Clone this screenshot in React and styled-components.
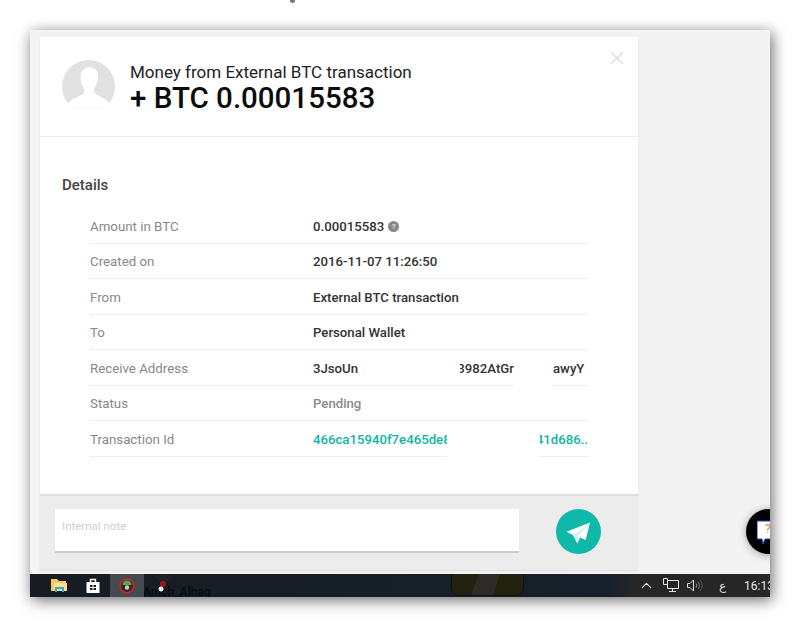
import styled, { createGlobalStyle } from 'styled-components';
import { ChevronUp } from 'lucide-react';

const GlobalStyle = createGlobalStyle`
  html, body {
    margin: 0;
    background: #fff;
    font-family: Roboto, "Liberation Sans", sans-serif;
  }
`;

const rows = [
  { label: 'Amount in BTC', value: '0.00015583', hint: true },
  { label: 'Created on', value: '2016-11-07 11:26:50' },
  { label: 'From', value: 'External BTC transaction' },
  { label: 'To', value: 'Personal Wallet' },
];

function App() {
  return (
    <Page>
      <GlobalStyle />
      <CursorMark />
      <Frame>
        <Main>
          <Panel>
            <Header>
              <Avatar viewBox="0 0 53 53">
                <circle cx="26.5" cy="26.5" r="26.5" fill="#e1e1e1" />
                <path
                  d="M5 45C8 38 18 37 22 33C23 31 22 29 21 27C19 24 18 18 19 14C20 9 24 7 27 7C31 7 35 9 36 14C37 18 35 24 33 27C32 29 31 31 33 33C37 37 45 38 48 45L48 53L5 53Z"
                  fill="#fff"
                />
              </Avatar>
              <Heading>
                <Title>Money from External BTC transaction</Title>
                <Amount>+ BTC 0.00015583</Amount>
              </Heading>
              <Close viewBox="0 0 14 14">
                <path d="M1 1L13 13M13 1L1 13" stroke="#dcdcdc" strokeWidth="1.3" fill="none" />
              </Close>
            </Header>
            <Body>
              <SectionTitle>Details</SectionTitle>
              <Table>
                {rows.map((row) => (
                  <Row key={row.label}>
                    <Label>{row.label}</Label>
                    <Value>
                      {row.value}
                      {row.hint && <Hint>?</Hint>}
                    </Value>
                  </Row>
                ))}
                <Row>
                  <Label>Receive Address</Label>
                  <Value>
                    <Piece $w={147}>3JsoUn</Piece>
                    <Piece $w={54} $end>3982AtGr</Piece>
                    <Gap $w={39} />
                    <Piece $w={35}>awyY</Piece>
                  </Value>
                </Row>
                <Row>
                  <Label>Status</Label>
                  <Value $muted>Pending</Value>
                </Row>
                <Row>
                  <Label>Transaction Id</Label>
                  <Value $link>
                    <Piece $w={134}>466ca15940f7e465de8</Piece>
                    <Gap $w={93} />
                    <Piece $w={48} $end>41d686..</Piece>
                  </Value>
                </Row>
              </Table>
            </Body>
            <Footer>
              <NoteBox>Internal note</NoteBox>
              <SendButton>
                <svg width="45" height="45" viewBox="0 0 45 45">
                  <path d="M34 13.500L10.500 22.700L17 26L21.300 34.500L24 28.500L29.700 31Z" fill="#fff" />
                  <path d="M34 13.500L17 26L21.300 34.500L22 27.500Z" fill="#d5f3ef" />
                </svg>
              </SendButton>
            </Footer>
          </Panel>
        </Main>
        <ChatBubble>
          <svg width="24" height="26" viewBox="0 0 24 26">
            <path d="M0 2H24V20H8L6 25L5 20H0Z" fill="#fff" stroke="#2a3fd0" strokeWidth="1" />
            <text x="8" y="14" fontSize="12" fill="#d9805a" fontFamily="Roboto">?</text>
          </svg>
        </ChatBubble>
        <Taskbar>
          <Wallpaper>
            <WallpaperName>Amch_Alhaq</WallpaperName>
            <WallpaperMark width="30" height="23" viewBox="0 0 30 23">
              <path d="M4 2L16 0L24 3L16 8L8 6Z" fill="#1f2226" />
              <circle cx="13" cy="10" r="3" fill="#a5121a" />
              <circle cx="11" cy="15" r="2.500" fill="#f2f2f2" />
            </WallpaperMark>
            <WallpaperBadge />
          </Wallpaper>
          <TaskIcons>
            <TaskIcon>
              <svg width="17" height="15" viewBox="0 0 17 15">
                <path d="M0 1H6L8 3H15V13H0Z" fill="#f4c95d" />
                <path d="M3 5H16V13H3Z" fill="#ffe08a" />
                <path d="M4 14V9H13V14H11V11H6V14Z" fill="#35a6e0" />
              </svg>
            </TaskIcon>
            <TaskIcon>
              <svg width="14" height="16" viewBox="0 0 14 16">
                <path d="M0.500 4H13.500V15H0.500Z" fill="#fff" />
                <path d="M4.500 4V1.500H9.500V4" stroke="#fff" strokeWidth="1.4" fill="none" />
                <path d="M4 7H6.500V9H4ZM7.500 7H10V9H7.500ZM4 10H6.500V12H4ZM7.500 10H10V12H7.500Z" fill="#1a1f24" />
              </svg>
            </TaskIcon>
            <TaskIcon $active>
              <svg width="16" height="16" viewBox="0 0 16 16">
                <circle cx="8" cy="8" r="6.800" fill="#2b2b2b" stroke="#d8242b" strokeWidth="1.600" />
                <path d="M3.500 7A4.500 4.500 0 0 1 12.500 7Z" fill="#57a64a" />
                <circle cx="8" cy="9.500" r="2.200" fill="#c9c9c9" />
              </svg>
            </TaskIcon>
          </TaskIcons>
          <Tray>
            <ChevronUp size={17} color="#e8e8e8" strokeWidth={1.6} />
            <svg width="16" height="15" viewBox="0 0 16 15" fill="none" stroke="#e4e4e4">
              <path d="M4.500 2.500H15.500V10.500H4.500Z" />
              <path d="M0.500 0.500H4.500V6.500H0.500Z" fill="#262626" />
              <path d="M9.500 10.500V13.500M6 13.500H13" />
            </svg>
            <svg width="16" height="13" viewBox="0 0 16 13" fill="none" stroke="#dcdcdc">
              <path d="M0.500 4.500H3L6.500 1V12L3 8.500H0.500Z" />
              <path d="M9 4.500A3 3 0 0 1 9 8.500" stroke="#999" />
              <path d="M11 3A5 5 0 0 1 11 10" stroke="#777" />
              <path d="M13 1A8 8 0 0 1 13 12" stroke="#555" />
            </svg>
            <Lang>ع</Lang>
            <Clock>16:13</Clock>
          </Tray>
        </Taskbar>
      </Frame>
    </Page>
  );
}

const Page = styled.div`
  position: relative;
  width: 800px;
  height: 627px;
  box-sizing: border-box;
  padding: 30px;
  overflow: hidden;
`;

const CursorMark = styled.div`
  position: absolute;
  left: 290px;
  top: 0;
  width: 5px;
  height: 3px;
  border-radius: 0 0 3px 3px;
  background: #777;
`;

const Frame = styled.div`
  position: relative;
  display: flex;
  flex-direction: column;
  width: 740px;
  height: 567px;
  overflow: hidden;
  background: #f3f3f3;
  box-shadow: 2px 3px 14px rgba(0, 0, 0, 0.6);
`;

const Main = styled.div`
  flex: 1;
  min-height: 0;
  padding: 7px 0 0 10px;
`;

const Panel = styled.div`
  display: flex;
  flex-direction: column;
  width: 598px;
  height: 533px;
  background: #fff;
  box-shadow: 0 1px 2px rgba(0, 0, 0, 0.08);
`;

const Header = styled.div`
  position: relative;
  display: flex;
  align-items: flex-start;
  gap: 15px;
  flex: none;
  box-sizing: border-box;
  height: 100px;
  padding: 23px 22px 0;
  border-bottom: 1px solid #ececec;
`;

const Avatar = styled.svg`
  flex: none;
  width: 53px;
  height: 53px;
  clip-path: inset(0 0 8% 0);
`;

const Heading = styled.div`
  display: flex;
  flex-direction: column;
  margin-top: 2px;
`;

const Title = styled.div`
  font-size: 17px;
  line-height: 20px;
  color: #222;
`;

const Amount = styled.div`
  font-size: 29.5px;
  line-height: 32px;
  font-weight: 500;
  color: #0c0c0c;
`;

const Close = styled.svg`
  position: absolute;
  top: 14px;
  right: 14px;
  width: 14px;
  height: 14px;
`;

const Body = styled.div`
  flex: 1;
  min-height: 0;
  padding: 39px 50px 0 22px;
`;

const SectionTitle = styled.div`
  font-size: 15px;
  line-height: 18px;
  font-weight: 500;
  color: #444;
  margin-bottom: 14px;
`;

const Table = styled.div`
  margin-left: 28px;
`;

const Row = styled.div`
  display: grid;
  grid-template-columns: 223px 1fr;
  align-items: center;
  box-sizing: border-box;
  height: 35.5px;
  padding-top: 2px;
  border-bottom: 1px solid #eee;
`;

const Label = styled.div`
  font-size: 13.3px;
  color: #888;
`;

const Value = styled.div`
  display: flex;
  align-items: center;
  align-self: stretch;
  white-space: nowrap;
  font-size: 13.2px;
  font-weight: 500;
  color: ${(p) => (p.$link ? '#10b5a3' : p.$muted ? '#8a8a8a' : '#333')};
`;

const Piece = styled.span`
  display: flex;
  justify-content: ${(p) => (p.$end ? 'flex-end' : 'flex-start')};
  flex: none;
  width: ${(p) => p.$w}px;
  overflow: hidden;
`;

const Gap = styled.span`
  flex: none;
  align-self: stretch;
  width: ${(p) => p.$w}px;
  margin-bottom: -1px;
  background: #fff;
`;

const Hint = styled.span`
  display: inline-flex;
  align-items: center;
  justify-content: center;
  width: 11px;
  height: 11px;
  margin-left: 4px;
  border-radius: 50%;
  background: #888;
  color: #ddd;
  font-size: 8px;
  font-weight: 700;
`;

const Footer = styled.div`
  display: flex;
  align-items: center;
  justify-content: space-between;
  flex: none;
  box-sizing: border-box;
  height: 76px;
  padding: 0 37px 4px 15px;
  background: #ececec;
  border-top: 2px solid #ddd;
`;

const NoteBox = styled.div`
  box-sizing: border-box;
  width: 464px;
  height: 44px;
  padding: 10px 7px;
  background: #fff;
  border-bottom: 2px solid #ccc;
  font-size: 11.5px;
  line-height: 14px;
  color: #d0d0d0;
`;

const SendButton = styled.div`
  display: flex;
  width: 45px;
  height: 45px;
  border-radius: 50%;
  background: #0fb8a8;
`;

const ChatBubble = styled.div`
  position: absolute;
  left: 716px;
  top: 479px;
  display: flex;
  align-items: center;
  box-sizing: border-box;
  width: 45px;
  height: 45px;
  padding-left: 11px;
  border-radius: 50%;
  background: #000;
  box-shadow: 0 1px 8px rgba(0, 0, 0, 0.35);
`;

const Taskbar = styled.div`
  position: relative;
  display: flex;
  align-items: center;
  justify-content: space-between;
  flex: none;
  height: 23px;
  background: linear-gradient(to right, #161c22 0, #17202a 78%, #262626 82%);
`;

const Wallpaper = styled.div`
  position: absolute;
  inset: 0;
  overflow: hidden;
`;

const WallpaperName = styled.span`
  position: absolute;
  left: 113px;
  top: 11px;
  font-size: 12px;
  font-weight: 700;
  color: #0a0c0e;
`;

const WallpaperMark = styled.svg`
  position: absolute;
  left: 120px;
  top: 0;
`;

const WallpaperBadge = styled.div`
  position: absolute;
  left: 421px;
  top: -4px;
  width: 73px;
  height: 26px;
  box-sizing: border-box;
  border: 1px solid #111;
  border-radius: 0 0 8px 8px;
  background: linear-gradient(110deg, #23220e 0 35%, #2c2b27 35% 62%, #23220e 62%);
`;

const TaskIcons = styled.div`
  position: relative;
  display: flex;
  height: 100%;
  padding-left: 12px;
`;

const TaskIcon = styled.div`
  display: flex;
  align-items: center;
  justify-content: center;
  width: 34px;
  height: 100%;
  background: ${(p) => (p.$active ? '#434b50' : 'transparent')};
`;

const Tray = styled.div`
  position: relative;
  display: flex;
  align-items: center;
  gap: 8px;
  height: 100%;
  margin-right: -4px;
`;

const Lang = styled.span`
  margin-left: 8px;
  font-size: 12px;
  color: #ddd;
`;

const Clock = styled.span`
  margin-left: 10px;
  font-size: 12px;
  color: #e6e6e6;
`;

export default App;
